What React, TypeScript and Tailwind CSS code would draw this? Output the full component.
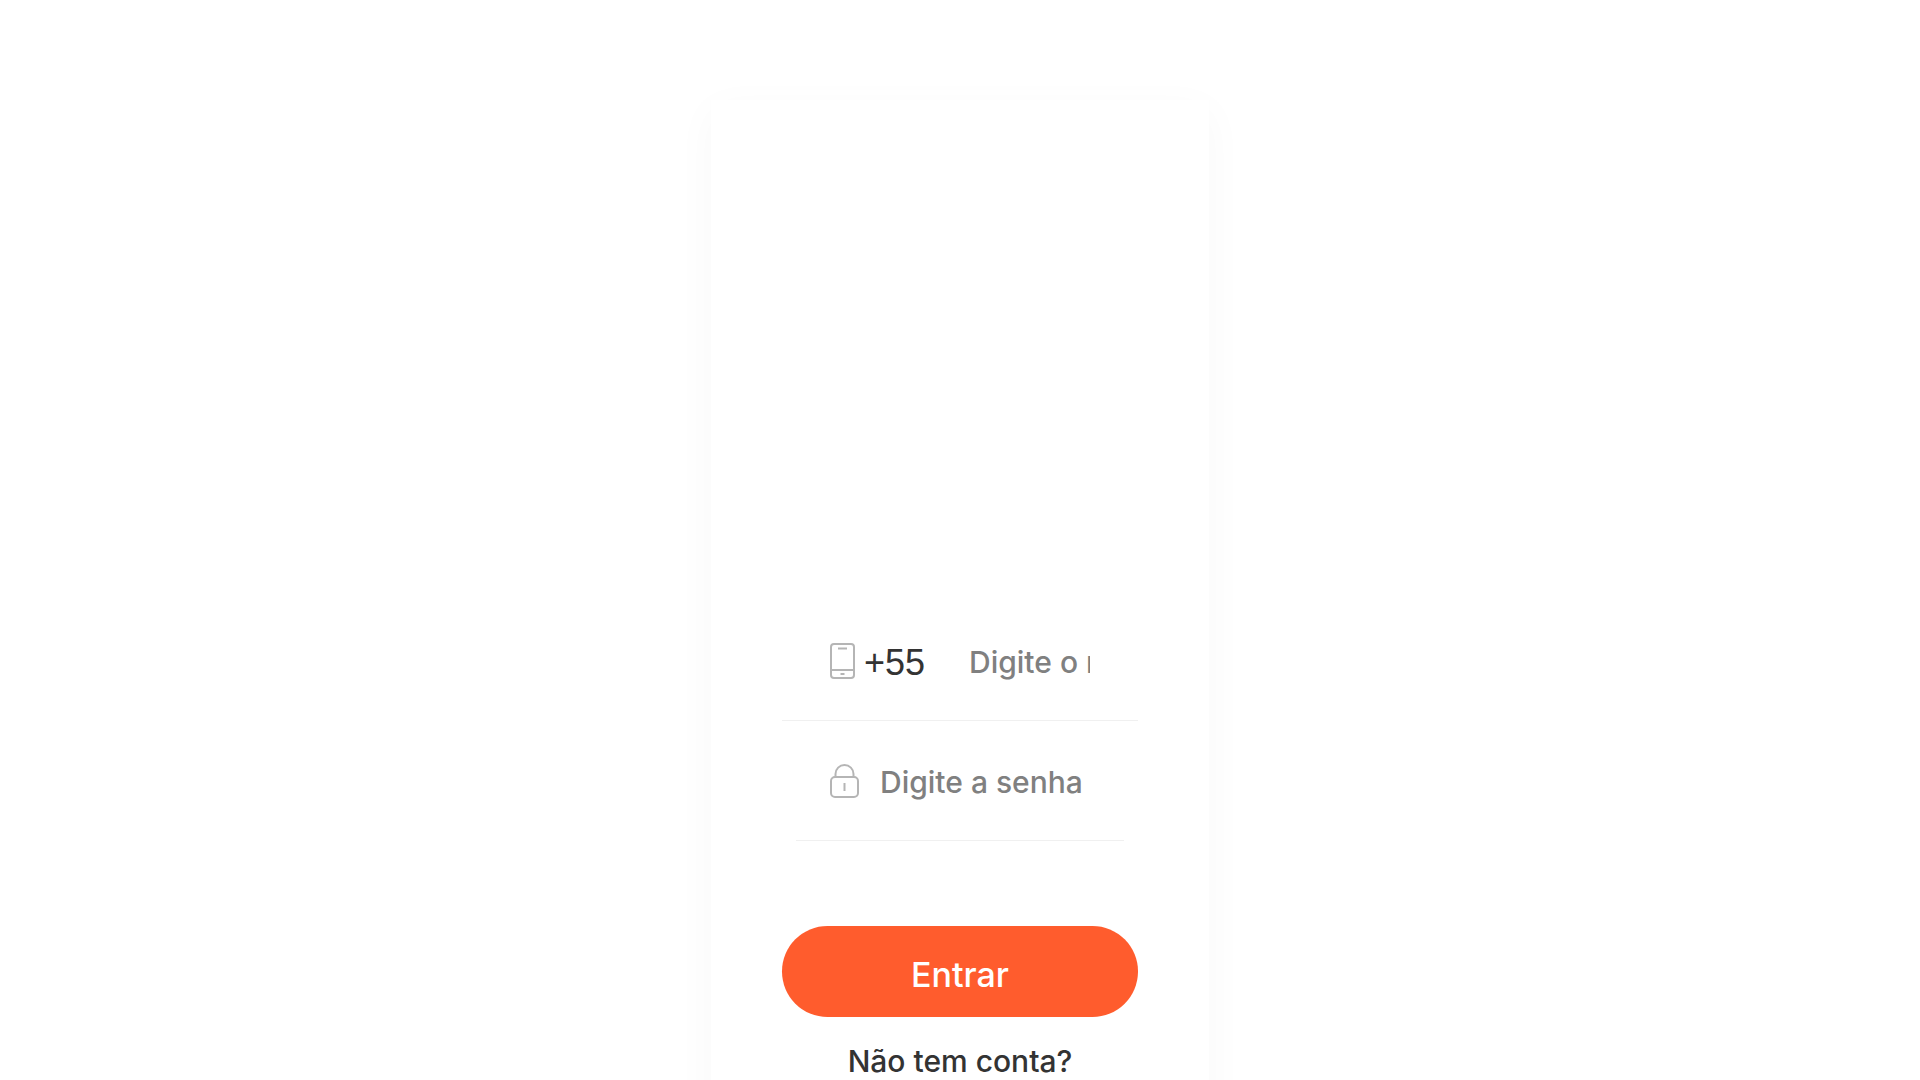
const PhoneIcon = () => (
  <svg width="26" height="38" viewBox="0 0 26 38" fill="none" stroke="#b5b5b5" strokeWidth="2" className="shrink-0" aria-hidden="true">
    <rect x="1" y="2" width="23" height="34" rx="3" />
    <path d="M1 28h23" />
    <path d="M8 6.500h9" />
    <path d="M10.500 32h4" />
  </svg>
);

const LockIcon = () => (
  <svg width="30" height="38" viewBox="0 0 30 38" fill="none" stroke="#b5b5b5" strokeWidth="2" className="shrink-0" aria-hidden="true">
    <rect x="1" y="15" width="27" height="20" rx="4" />
    <path d="M5.500 15v-3a9 9 0 0 1 18 0v3" />
    <path d="M14.500 21v8" />
  </svg>
);

const App = () => {
  return (
    <main className="min-h-screen bg-white pt-[100px] font-['Inter',sans-serif] font-medium text-[#333333]">
      <div className="mx-auto w-full max-w-[498px] bg-white px-[71px] pb-24 shadow-[0_10px_40px_rgba(0,0,0,0.03)]">
        {/* Logo area */}
        <div className="h-[501px]" />

        <form onSubmit={(e) => e.preventDefault()}>
          <div className="flex h-[120px] items-center border-b border-[#f0f0f0] px-12">
            <PhoneIcon />
            <label htmlFor="phone" className="ml-2 w-[89px] shrink-0 pt-1 font-['Liberation_Sans',sans-serif] text-[36px] leading-10">
              +55
            </label>
            <input
              id="phone"
              type="tel"
              placeholder="Digite o número"
              className="ml-4 h-12 min-w-0 flex-1 bg-transparent pt-0.5 text-[30px] outline-none placeholder:text-[#808080]"
            />
          </div>

          <div className="mx-3.5 flex h-[120px] items-center border-b border-[#f0f0f0] px-[34px]">
            <LockIcon />
            <input
              type="password"
              aria-label="Digite a senha"
              placeholder="Digite a senha"
              className="ml-5 h-12 min-w-0 flex-1 bg-transparent pt-0.5 text-[30px] outline-none placeholder:text-[#808080]"
            />
          </div>

          <button type="submit" className="mt-[85px] flex h-[91px] w-full items-center justify-center rounded-full bg-[#ff5c2d] pt-1.5 text-[34px] text-white">
            Entrar
          </button>
        </form>

        <p className="mt-6 text-center text-[30px] leading-10">Não tem conta?</p>
      </div>
    </main>
  );
};

export default App;
